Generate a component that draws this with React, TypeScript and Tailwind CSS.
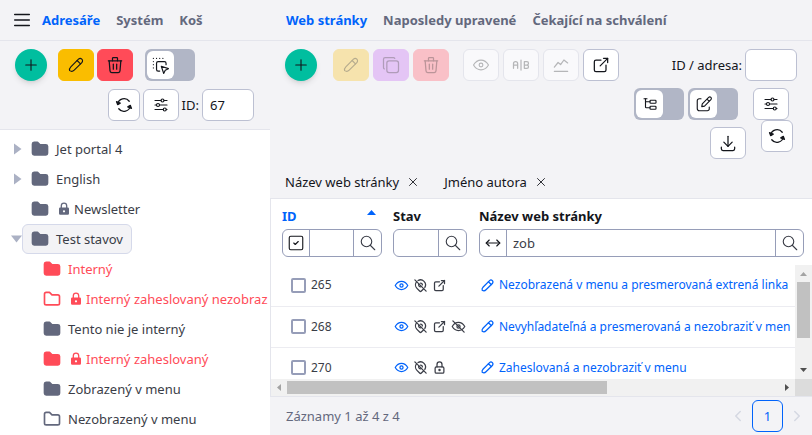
import { useState } from "react";
import type { ReactNode } from "react";
import {
  TbAB, TbAdjustmentsHorizontal, TbArrowsHorizontal, TbChevronLeft, TbChevronRight,
  TbCopy, TbDownload, TbDragDrop, TbExternalLink, TbFolder, TbFolderFilled,
  TbLock, TbMapPinOff, TbMenu2, TbPlus, TbSearch, TbSquareCheck,
  TbSubtask, TbTrash, TbX,
} from "react-icons/tb";

type GlyphProps = { size?: number; weight?: number; className?: string; children?: ReactNode };

function Glyph({ size = 20, weight = 1.5, className = "", children }: GlyphProps) {
  return (
    <svg width={size} height={size} viewBox="0 0 24 24" fill="none" stroke="currentColor" strokeWidth={weight} strokeLinecap="round" strokeLinejoin="round" className={"shrink-0 " + className} aria-hidden="true">
      {children}
    </svg>
  );
}

function PencilIcon(props: GlyphProps) {
  return (
    <Glyph {...props}>
      <path d="M3.500 19.500c-.6-1.700.1-3.600 1.600-5.100L15.300 4.200a3.100 3.100 0 0 1 4.500 4.500L9.600 18.900c-1.500 1.500-3.800 2.100-6.100.6Z" />
      <path d="M13.500 6l4.500 4.500" />
    </Glyph>
  );
}

function EditIcon(props: GlyphProps) {
  return (
    <Glyph {...props}>
      <path d="M8 5H5.500A2.500 2.500 0 0 0 3 7.500V18a3 3 0 0 0 3 3h10.500a2.500 2.500 0 0 0 2.500-2.500V16" />
      <path d="M9 15.500l.7-3.700 8.500-8.500a2.100 2.100 0 0 1 3 3l-8.500 8.500L9 15.500ZM16 5.500l3 3" />
    </Glyph>
  );
}

function EyeIcon({ off, ...props }: GlyphProps & { off?: boolean }) {
  return (
    <Glyph {...props}>
      <path d="M2 12c2.500-4.200 6-6.500 10-6.500S19.500 7.800 22 12c-2.500 4.200-6 6.500-10 6.500S4.500 16.200 2 12Z" />
      <circle cx="12" cy="12" r="2.500" />
      {off && <path d="M3 3l18 18" />}
    </Glyph>
  );
}

function RefreshIcon() {
  return (
    <Glyph size={18} weight={1.700}>
      <path d="M3.500 11A8.700 8.700 0 0 1 19 7M20.500 13A8.700 8.700 0 0 1 5 17" />
      <path d="M2 7.500 3.500 11.500 7 9.500ZM22 16.500 20.500 12.500 17 14.500Z" fill="currentColor" />
    </Glyph>
  );
}

function TrendIcon() {
  return (
    <Glyph>
      <path d="M4 19.500h16M4 14.500l4.500-5.500 3 2.500L15.500 6l4.500 3.500" />
    </Glyph>
  );
}

function RoundAdd({ label }: { label: string }) {
  return (
    <button aria-label={label} className="flex size-8 shrink-0 items-center justify-center rounded-full bg-[#00be9f] shadow-md">
      <TbPlus size={18} strokeWidth={1.5} />
    </button>
  );
}

function ToolButton({ label, tone, children, disabled }: { label: string; tone: string; children: ReactNode; disabled?: boolean }) {
  return (
    <button aria-label={label} disabled={disabled} className={"flex h-8 w-9 shrink-0 items-center justify-center rounded-md border " + tone}>
      {children}
    </button>
  );
}

const WHITE = "border-[#bcc0d2] bg-white";
const FADED = "border-[#e4e5ec] bg-[#f9f9fb] text-[#b5b6b8]";

function Toggle({ label, children }: { label: string; children: ReactNode }) {
  return (
    <label className="flex h-8 w-[50px] shrink-0 items-center rounded-md bg-[#b1b6c6] p-0.5">
      <input type="checkbox" aria-label={label} className="peer sr-only" />
      <span className="flex h-7 w-[27px] items-center justify-center rounded-md bg-white peer-checked:ml-auto">{children}</span>
    </label>
  );
}

function LockSolid() {
  return (
    <svg width="12" height="14" viewBox="0 0 12 14" className="mr-1 ml-0.5 shrink-0" aria-hidden="true">
      <path d="M3.300 6V3.800a2.700 2.700 0 0 1 5.400 0V6" fill="none" stroke="currentColor" strokeWidth="1.300" />
      <path fillRule="evenodd" fill="currentColor" d="M2.200 5.600h7.600a1.200 1.200 0 0 1 1.200 1.200v4.800a1.200 1.200 0 0 1-1.200 1.200H2.200A1.200 1.200 0 0 1 1 11.600V6.800a1.200 1.200 0 0 1 1.200-1.200ZM6 8.200a1.100 1.100 0 1 0 0 2.200 1.100 1.100 0 0 0 0-2.200Z" />
    </svg>
  );
}

type Node = { name: string; nested?: boolean; arrow?: "right" | "down"; lock?: boolean; red?: boolean; open?: boolean; selected?: boolean };

const nodes: Node[] = [
  { name: "Jet portal 4", arrow: "right" },
  { name: "English", arrow: "right" },
  { name: "Newsletter", lock: true },
  { name: "Test stavov", arrow: "down", selected: true },
  { name: "Interný", nested: true, red: true },
  { name: "Interný zaheslovaný nezobraz", nested: true, red: true, lock: true, open: true },
  { name: "Tento nie je interný", nested: true },
  { name: "Interný zaheslovaný", nested: true, red: true, lock: true },
  { name: "Zobrazený v menu", nested: true },
  { name: "Nezobrazený v menu", nested: true, open: true },
];

function TreeRow({ node }: { node: Node }) {
  const tint = node.red ? "text-[#ff4b58]" : "text-[#63687d]";
  return (
    <li className={"flex h-[30px] items-center " + (node.nested ? "pl-3" : "")}>
      <span className="flex w-[22px] shrink-0 justify-end">
        {node.arrow === "right" && (
          <svg width="8" height="12" viewBox="0 0 8 12" className="fill-[#abb1c4]"><path d="M0 0.500 7.500 6 0 11.500Z" /></svg>
        )}
        {node.arrow === "down" && (
          <svg width="11" height="8" viewBox="0 0 11 8" className="fill-[#abb1c4]"><path d="M0 0.500H11L5.500 7.500Z" /></svg>
        )}
      </span>
      <a href="#" className={"flex h-[30px] shrink-0 items-center rounded-md border pr-2 pl-[7px] whitespace-nowrap " + (node.selected ? "border-[#d5d9ea] bg-[#f3f3f6]" : "border-transparent")}>
        <span className={"mr-1.5 " + tint}>
          {node.open ? <TbFolder size={20} strokeWidth={2} /> : <TbFolderFilled size={20} />}
        </span>
        {node.lock && <span className={tint}><LockSolid /></span>}
        <span className={node.red ? "text-[#ff4b58]" : "text-[#3a3d47]"}>{node.name}</span>
      </a>
    </li>
  );
}

function SearchButton({ label }: { label: string }) {
  return (
    <button aria-label={label} className="flex w-7 shrink-0 items-center justify-center border-l border-[#969db8] text-[#3a3d47]">
      <TbSearch size={18} strokeWidth={1.5} />
    </button>
  );
}

const filterBox = "flex h-7 overflow-hidden rounded-md border border-[#969db8] bg-white";

const rows = [
  { id: 265, icons: ["pin", "link"], title: "Nezobrazená v menu a presmerovaná extrená linka" },
  { id: 268, icons: ["pin", "link", "hidden"], title: "Nevyhľadateľná a presmerovaná a nezobraziť v men" },
  { id: 270, icons: ["pin", "lock"], title: "Zaheslovaná a nezobraziť v menu" },
];

function StateIcon({ kind }: { kind: string }) {
  if (kind === "pin") return <TbMapPinOff size={15} strokeWidth={2} />;
  if (kind === "link") return <TbExternalLink size={15} strokeWidth={2} />;
  if (kind === "hidden") return <EyeIcon off size={15} weight={2} />;
  return <TbLock size={15} strokeWidth={2} />;
}

function Columns() {
  return (
    <colgroup>
      <col className="w-[116px]" />
      <col className="w-[86px]" />
      <col />
    </colgroup>
  );
}

const tabBase = "whitespace-nowrap font-bold ";

export default function App() {
  const [folderId, setFolderId] = useState("67");
  const [query, setQuery] = useState("zob");
  return (
    <div className="flex h-screen overflow-hidden bg-[#f3f3f6] font-['Noto_Sans',sans-serif] text-[13px] leading-5 text-[#13151b]">
      <aside className="flex w-[270px] shrink-0 flex-col overflow-hidden">
        <nav className="flex h-[41px] shrink-0 items-center border-b border-[#e4e5ec] pl-[11px] text-[#63687d]">
          <button aria-label="Menu" className="mr-[9px] text-[#13151b]"><TbMenu2 size={22} strokeWidth={1.5} /></button>
          <a href="#" className={tabBase + "mr-4 text-[#0063fb]"}>Adresáře</a>
          <a href="#" className={tabBase + "mr-4"}>Systém</a>
          <a href="#" className={tabBase}>Koš</a>
        </nav>
        <div className="flex flex-col gap-2 border-b border-[#e4e5ec] py-2 pl-[15px]">
          <div className="flex items-center">
            <RoundAdd label="Přidat adresář" />
            <div className="ml-[11px] flex gap-[3px]">
              <ToolButton label="Upravit" tone="border-[#fabd00] bg-[#fabd00]"><PencilIcon size={18} /></ToolButton>
              <ToolButton label="Smazat" tone="border-[#ff4b58] bg-[#ff4b58]"><TbTrash size={20} strokeWidth={1.5} /></ToolButton>
            </div>
            <div className="ml-3"><Toggle label="Výběr"><TbDragDrop size={19} strokeWidth={1.5} /></Toggle></div>
          </div>
          <div className="flex items-center justify-end gap-[3px] pr-4">
            <button aria-label="Obnovit" className={"flex size-8 items-center justify-center rounded-md border " + WHITE}><RefreshIcon /></button>
            <ToolButton label="Nastavení" tone={WHITE}><TbAdjustmentsHorizontal size={18} strokeWidth={1.5} /></ToolButton>
            <label htmlFor="folder-id">ID:</label>
            <input id="folder-id" value={folderId} onChange={(e) => setFolderId(e.target.value)} className={"h-8 w-[52px] rounded-md border px-[7px] " + WHITE} />
          </div>
        </div>
        <ul className="flex-1 overflow-hidden bg-white pt-1">
          {nodes.map((n) => <TreeRow key={n.name} node={n} />)}
        </ul>
      </aside>

      <main className="flex min-w-0 flex-1 flex-col">
        <nav className="flex h-[41px] shrink-0 items-center gap-4 border-b border-[#e4e5ec] pl-4 text-[#63687d]">
          <a href="#" className={tabBase + "text-[#0063fb]"}>Web stránky</a>
          <a href="#" className={tabBase}>Naposledy upravené</a>
          <a href="#" className={tabBase}>Čekající na schválení</a>
        </nav>
        <div className="pt-2 pr-[15px] pl-[15px]">
          <div className="flex items-center">
            <RoundAdd label="Přidat stránku" />
            <div className="ml-4 flex gap-1">
              <ToolButton disabled label="Upravit" tone="border-[#f6e3ad] bg-[#f6e3ad] text-[#b5ab8d]"><PencilIcon size={18} /></ToolButton>
              <ToolButton disabled label="Kopírovat" tone="border-[#e4c5f5] bg-[#e4c5f5] text-[#b09cb9]"><TbCopy size={20} strokeWidth={1.5} /></ToolButton>
              <ToolButton disabled label="Smazat" tone="border-[#f9c0c7] bg-[#f9c0c7] text-[#bb9499]"><TbTrash size={20} strokeWidth={1.5} /></ToolButton>
            </div>
            <div className="ml-3.5 flex gap-1">
              <ToolButton disabled label="Náhled" tone={FADED}><EyeIcon size={18} /></ToolButton>
              <ToolButton disabled label="AB test" tone={FADED}><TbAB size={20} strokeWidth={1.5} /></ToolButton>
              <ToolButton disabled label="Statistika" tone={FADED}><TrendIcon /></ToolButton>
              <ToolButton label="Otevřít" tone={WHITE}><TbExternalLink size={20} strokeWidth={1.5} /></ToolButton>
            </div>
            <label htmlFor="page-id" className="mr-[3px] ml-auto whitespace-nowrap">ID / adresa:</label>
            <input id="page-id" className={"h-8 w-[52px] rounded-md border px-2 " + WHITE} />
          </div>
          <div className="mt-[7px] flex justify-end gap-1 pr-2">
            <Toggle label="Strom"><TbSubtask size={18} strokeWidth={1.5} /></Toggle>
            <Toggle label="Editace"><EditIcon size={18} /></Toggle>
            <div className="ml-[11px]"><ToolButton label="Nastavení" tone={WHITE}><TbAdjustmentsHorizontal size={18} strokeWidth={1.5} /></ToolButton></div>
          </div>
          <div className="flex items-start justify-end gap-[15px] pr-1">
            <div className="pt-[7px]"><ToolButton label="Stáhnout" tone={WHITE}><TbDownload size={20} strokeWidth={1.5} /></ToolButton></div>
            <button aria-label="Obnovit" className={"flex size-8 items-center justify-center rounded-md border " + WHITE}><RefreshIcon /></button>
          </div>
          <div className="mt-3 flex h-[27px] items-center gap-6 pb-1.5">
            <span className="flex items-center gap-[7px]">Název web stránky <button aria-label="Zrušit filtr Název web stránky"><TbX size={14} strokeWidth={1.5} /></button></span>
            <span className="flex items-center gap-[7px]">Jméno autora <button aria-label="Zrušit filtr Jméno autora"><TbX size={14} strokeWidth={1.5} /></button></span>
          </div>
        </div>

        <section className="flex min-h-0 flex-1 flex-col border-t border-l border-[#e4e5ec] bg-white">
          <table className="w-full shrink-0 table-fixed text-left">
            <Columns />
            <thead>
              <tr>
                <th className="pt-[7px] pr-[5px] pb-2 pl-[11px]">
                  <div className="flex h-[23px] items-start justify-between text-[#0063fb]">
                    ID
                    <svg width="9" height="5" viewBox="0 0 9 5" className="mt-1 mr-1.5 fill-[#0063fb]"><path d="M0 5 4.500 0 9 5Z" /></svg>
                  </div>
                  <div className={filterBox}>
                    <button aria-label="Vybrat vše" className="flex w-[27px] shrink-0 items-center justify-center border-r border-[#969db8]"><TbSquareCheck size={18} strokeWidth={1.5} /></button>
                    <input aria-label="Filtr ID" className="w-0 min-w-0 flex-1 px-1 font-normal" />
                    <SearchButton label="Hledat ID" />
                  </div>
                </th>
                <th className="px-1.5 pt-[7px] pb-2">
                  <div className="h-[23px]">Stav</div>
                  <div className={filterBox}>
                    <input aria-label="Filtr stavu" className="w-0 min-w-0 flex-1 px-1 font-normal" />
                    <SearchButton label="Hledat stav" />
                  </div>
                </th>
                <th className="pt-[7px] pr-2 pb-2 pl-1.5">
                  <div className="h-[23px]">Název web stránky</div>
                  <div className={filterBox}>
                    <button aria-label="Způsob hledání" className="flex w-[27px] shrink-0 items-center justify-center border-r border-[#969db8]"><TbArrowsHorizontal size={18} strokeWidth={1.5} /></button>
                    <input aria-label="Filtr názvu" value={query} onChange={(e) => setQuery(e.target.value)} className="w-0 min-w-0 flex-1 px-1.5 font-normal text-[#3a3d47]" />
                    <SearchButton label="Hledat název" />
                  </div>
                </th>
              </tr>
            </thead>
          </table>

          <div className="flex min-h-0 flex-1">
            <div className="min-w-0 flex-1 overflow-hidden">
              <table className="w-full table-fixed text-xs">
                <Columns />
                <tbody>
                  {rows.map((r) => (
                    <tr key={r.id} className="h-[41px] border-b border-[#ececf1]">
                      <td className="pl-5">
                        <label className="flex items-center gap-[5px] text-[#3a3d47]">
                          <input type="checkbox" className="size-[15px] appearance-none rounded-xs border-2 border-[#969db8] bg-white checked:bg-[#0063fb]" />
                          {r.id}
                        </label>
                      </td>
                      <td className="pl-[7px]">
                        <div className="flex gap-1 text-[#3a3d47]">
                          <EyeIcon size={15} weight={2} className="text-[#0063fb]" />
                          {r.icons.map((k) => <StateIcon key={k} kind={k} />)}
                        </div>
                      </td>
                      <td className="overflow-hidden pl-[7px]">
                        <a href="#" className="flex items-center gap-1 whitespace-nowrap text-[#0063fb]">
                          <PencilIcon size={15} weight={2} />
                          {r.title}
                        </a>
                      </td>
                    </tr>
                  ))}
                </tbody>
              </table>
            </div>
            <div className="flex w-[17px] shrink-0 flex-col items-center bg-[#f1f1f1]">
              <svg width="17" height="17" viewBox="0 0 17 17" className="shrink-0 fill-[#a3a3a3]"><path d="M5 11 8.500 7 12 11Z" /></svg>
              <div className="h-14 w-[13px] bg-[#c1c1c1]" />
              <svg width="17" height="17" viewBox="0 0 17 17" className="mt-auto shrink-0 fill-[#505050]"><path d="M5 6 8.500 10 12 6Z" /></svg>
            </div>
          </div>
          <div className="flex h-[17px] shrink-0 items-center bg-[#f1f1f1]">
            <svg width="16" height="17" viewBox="0 0 16 17" className="shrink-0 fill-[#a3a3a3]"><path d="M10 5 6 8.500 10 12Z" /></svg>
            <div className="h-[13px] w-[320px] bg-[#c1c1c1]" />
            <svg width="17" height="17" viewBox="0 0 17 17" className="ml-auto shrink-0 fill-[#505050]"><path d="M7 5 11 8.500 7 12Z" /></svg>
            <div className="h-[17px] w-[17px] shrink-0 bg-[#dcdcdc]" />
          </div>
        </section>

        <footer className="flex h-[39px] shrink-0 items-center justify-between border-t border-[#e4e5ec] pr-1.5 pl-4 text-[#63687d]">
          <span>Záznamy 1 až 4 z 4</span>
          <div className="flex items-center gap-[5px]">
            <button disabled aria-label="Předchozí" className="text-[#d5d8e2]"><TbChevronLeft size={18} strokeWidth={2} /></button>
            <button className="h-8 w-[31px] rounded-md border border-[#0063fb] text-[#0063fb]">1</button>
            <button disabled aria-label="Další" className="text-[#d5d8e2]"><TbChevronRight size={18} strokeWidth={2} /></button>
          </div>
        </footer>
      </main>
    </div>
  );
}
